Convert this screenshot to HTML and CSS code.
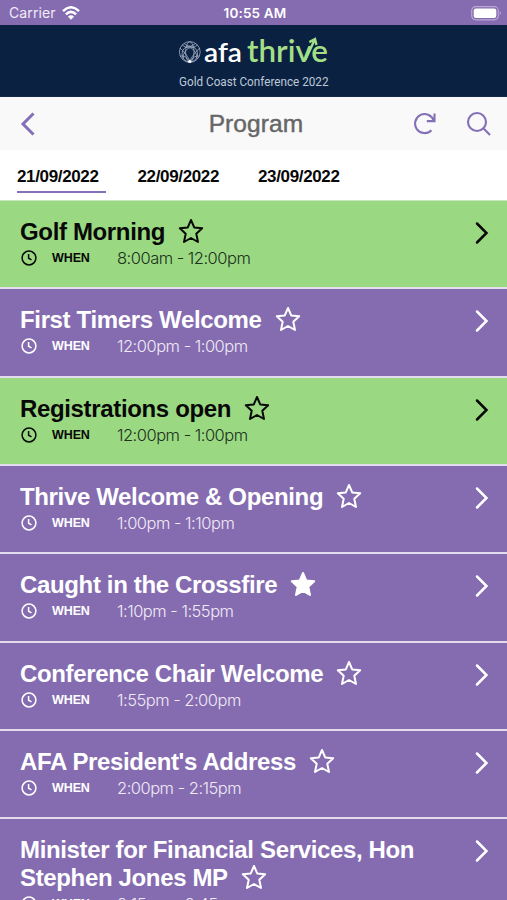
FILE: index.html
```
<!DOCTYPE html>
<html lang="en">
<head>
<meta charset="utf-8">
<title>Program</title>
<link rel="stylesheet" href="styles.css">
</head>
<body>
<svg class="defs" width="0" height="0" aria-hidden="true">
  <symbol id="star" viewBox="0 0 26 26"><path d="M13 2 L16.2 9.4 L24.2 10.2 L18.3 15.7 L20 24 L13 20 L6 24 L7.7 15.7 L1.8 10.2 L9.8 9.4 Z"/></symbol>
  <symbol id="clock" viewBox="0 0 16 16"><circle cx="8" cy="8" r="6.9"/><path d="M7.6 4 V8.2 L10.5 9.8"/></symbol>
  <symbol id="chevron" viewBox="0 0 14 24"><path d="M2 2.5 L11.5 12 L2 21.5"/></symbol>
</svg>
<div class="screen">
  <div class="status">
    <div class="carrier"><span>Carrier</span>
      <svg width="18" height="14" viewBox="0 0 18 14"><g fill="none" stroke="#fff" stroke-width="2.5"><path d="M1 5.1 Q9 -2.5 17 5.1"/><path d="M3.9 8.3 Q9 3.5 14.1 8.3"/></g><path d="M9 13.8 L5.9 10.6 Q9 7.8 12.1 10.6 Z" fill="#fff"/></svg>
    </div>
    <div class="clock-time">10:55 AM</div>
    <svg class="battery" width="31" height="15" viewBox="0 0 31 15"><rect x=".7" y=".7" width="26.6" height="13.1" rx="4" fill="none" stroke="#baa7d2" stroke-width="1.2"/><rect x="2.7" y="2.6" width="22.6" height="9.4" rx="2.2" fill="#fff"/><path d="M28.8 5 Q31 7.2 28.8 9.4 Z" fill="#baa7d2"/></svg>
  </div>
  <div class="banner">
    <svg width="160" height="60" viewBox="174 33 160 60">
      <g fill="none" stroke="#a9b7cc" stroke-width=".75"><circle cx="189.8" cy="52" r="10.4"/><ellipse cx="189.8" cy="52" rx="4.2" ry="10.2"/><ellipse cx="189.8" cy="54" rx="7.8" ry="8"/><path d="M180 48 Q190 58 189.8 62 Q190 58 199.6 48 M182 45 Q190 51 197.6 45 M180 56 Q186 55 189.8 62 Q194 55 199.6 56 M184 43.5 Q198 50 197 59 M195.6 43.5 Q182 50 183 59"/></g>
      <circle cx="189.8" cy="61.5" r="1.6" fill="#fff"/>
      <text class="logo-afa" x="204" y="62" textLength="38" lengthAdjust="spacingAndGlyphs">afa</text>
      <text class="logo-thrive" x="247" y="61.6" textLength="81" lengthAdjust="spacingAndGlyphs">thrive</text>
      <path d="M305.3 60 L314.3 40.5 M309.3 42.1 L315 39 L316.5 45" fill="none" stroke="#a4df86" stroke-width="2.4"/>
      <text class="logo-sub" x="179" y="86.2" textLength="149.5" lengthAdjust="spacingAndGlyphs">Gold Coast Conference 2022</text>
    </svg>
  </div>
  <div class="nav">
    <svg class="back" width="16" height="26" viewBox="0 0 16 26"><path d="M13.5 2.5 L3 13 L13.5 23.5"/></svg>
    <h1>Program</h1>
    <div class="actions">
      <svg width="24" height="24" viewBox="0 0 24 24"><path d="M18.4 18.2 A9.5 9.5 0 1 1 20.6 8.6 M21.5 1.5 V9.1 H13.8"/></svg>
      <svg width="26" height="26" viewBox="0 0 26 26"><circle cx="11" cy="11" r="9"/><path d="M17.6 17.6 L24 24"/></svg>
    </div>
  </div>
  <div class="dates"><span class="date active">21/09/2022</span><span class="date">22/09/2022</span><span class="date">23/09/2022</span></div>
  <div class="list">
    <div class="row green"><div class="title">Golf Morning<svg class="star"><use href="#star"/></svg></div><div class="meta"><svg class="clock"><use href="#clock"/></svg><b>WHEN</b><span>8:00am - 12:00pm</span></div><svg class="chevron"><use href="#chevron"/></svg></div>
    <div class="row"><div class="title">First Timers Welcome<svg class="star"><use href="#star"/></svg></div><div class="meta"><svg class="clock"><use href="#clock"/></svg><b>WHEN</b><span>12:00pm - 1:00pm</span></div><svg class="chevron"><use href="#chevron"/></svg></div>
    <div class="row green"><div class="title">Registrations open<svg class="star"><use href="#star"/></svg></div><div class="meta"><svg class="clock"><use href="#clock"/></svg><b>WHEN</b><span>12:00pm - 1:00pm</span></div><svg class="chevron"><use href="#chevron"/></svg></div>
    <div class="row"><div class="title">Thrive Welcome &amp; Opening<svg class="star"><use href="#star"/></svg></div><div class="meta"><svg class="clock"><use href="#clock"/></svg><b>WHEN</b><span>1:00pm - 1:10pm</span></div><svg class="chevron"><use href="#chevron"/></svg></div>
    <div class="row"><div class="title">Caught in the Crossfire<svg class="star filled"><use href="#star"/></svg></div><div class="meta"><svg class="clock"><use href="#clock"/></svg><b>WHEN</b><span>1:10pm - 1:55pm</span></div><svg class="chevron"><use href="#chevron"/></svg></div>
    <div class="row"><div class="title">Conference Chair Welcome<svg class="star"><use href="#star"/></svg></div><div class="meta"><svg class="clock"><use href="#clock"/></svg><b>WHEN</b><span>1:55pm - 2:00pm</span></div><svg class="chevron"><use href="#chevron"/></svg></div>
    <div class="row"><div class="title">AFA President's Address<svg class="star"><use href="#star"/></svg></div><div class="meta"><svg class="clock"><use href="#clock"/></svg><b>WHEN</b><span>2:00pm - 2:15pm</span></div><svg class="chevron"><use href="#chevron"/></svg></div>
    <div class="row tall"><div class="title">Minister for Financial Services, Hon<br>Stephen Jones MP<svg class="star"><use href="#star"/></svg></div><div class="meta"><svg class="clock"><use href="#clock"/></svg><b>WHEN</b><span>2:15pm - 2:45pm</span></div><svg class="chevron"><use href="#chevron"/></svg></div>
  </div>
</div>
</body>
</html>
```
FILE: styles.css
```
* { box-sizing: border-box; }
body { margin: 0; font-family: "Liberation Sans", Arial, sans-serif; }
.defs { display: block; position: absolute; }
.screen { width: 507px; height: 900px; overflow: hidden; display: flex; flex-direction: column; background: #fff; }
.status { flex: none; height: 25px; padding: 1px 6px 0 9px; display: grid; grid-template-columns: 1fr auto 1fr; align-items: center; background: #856cb0; color: #fff; }
.carrier { display: flex; align-items: center; gap: 6px; font: 400 14px/24px Inter, sans-serif; letter-spacing: .1px; color: #f1ebf7; }
.clock-time { font: 600 13.5px/24px Inter, sans-serif; letter-spacing: .15px; }
.battery { justify-self: end; margin-right: -1px; }
.banner { flex: none; height: 72px; padding-top: 8px; display: flex; justify-content: center; background: #0b2141; border-bottom: 1px solid #14294a; }
.logo-afa { font: 600 27px Lato, sans-serif; fill: #fff; }
.logo-thrive { font: 600 30px Lato, sans-serif; fill: #a4df86; }
.logo-sub { font: 400 12.5px Roboto, sans-serif; fill: #bdc9d9; }
.nav { flex: none; height: 53px; padding: 1px 15px 0 20px; display: grid; grid-template-columns: 1fr auto 1fr; align-items: center; background: #f9f9f9; }
.nav svg { fill: none; stroke: #8470b7; stroke-width: 2.1; }
.nav .back { stroke-width: 3; }
.nav h1 { margin: 0; font: 500 24.5px/30px "Liberation Sans", sans-serif; color: #666; -webkit-text-stroke: .45px #666; letter-spacing: .1px; }
.actions { justify-self: end; display: flex; align-items: center; gap: 29px; }
.dates { flex: none; height: 50px; padding: 14px 17px 0; display: flex; gap: 32px; }
.date { width: 88.5px; height: 29px; font-size: 17px; line-height: 25px; font-weight: bold; letter-spacing: -.35px; white-space: nowrap; color: #080808; }
.active { border-bottom: 2px solid #8470b7; }
.list { flex: none; border-top: 1px solid #c4e8b9; }
.row { position: relative; height: 88.35px; padding: 17px 20px 0; background: #856cb0; color: #fff; border-bottom: 2px solid #e3dcec; }
.green { background: #9ad982; color: #080808; }
.tall { height: 118px; }
.title { font-size: 24px; line-height: 28px; font-weight: bold; letter-spacing: -.35px; white-space: nowrap; }
.star { width: 26px; height: 26px; margin-left: 13px; vertical-align: -4px; fill: none; stroke: currentColor; stroke-width: 2; stroke-linejoin: round; }
.filled { fill: currentColor; }
.meta { display: flex; align-items: center; height: 24px; margin-top: 0; padding-left: 1px; }
.clock { width: 16px; height: 16px; fill: none; stroke: currentColor; stroke-width: 1.5; }
.meta b { width: 65px; margin-left: 15px; font-size: 12.5px; letter-spacing: -.1px; }
.meta span { font: 300 16.5px/24px Inter, sans-serif; letter-spacing: -.5px; color: #f0eaf6; }
.green .meta span { color: #20301c; }
.chevron { position: absolute; right: 18px; top: 20px; width: 14px; height: 24px; fill: none; stroke: currentColor; stroke-width: 2.5; stroke-linecap: round; }
```
